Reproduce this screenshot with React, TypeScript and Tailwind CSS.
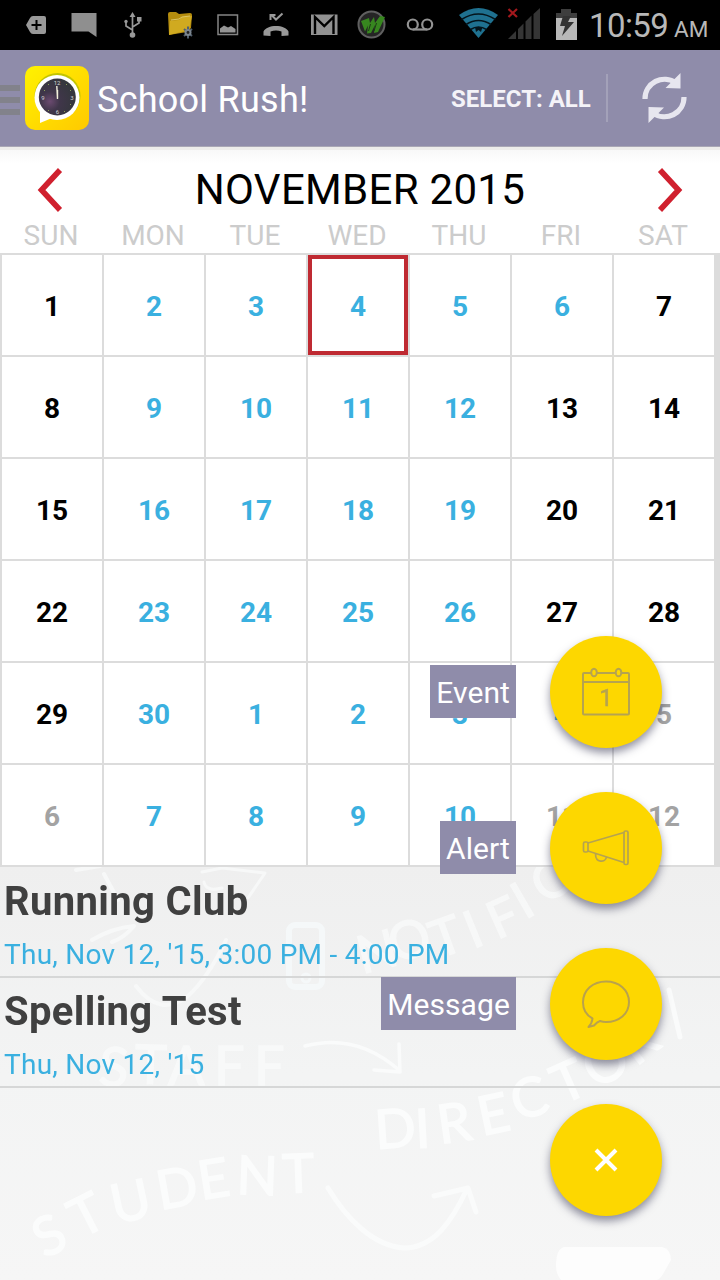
import type { ReactNode } from 'react';
import { clsx } from 'clsx';

type Tone = 'dark' | 'blue' | 'gray';

interface Day {
  label: number;
  tone: Tone;
  selected?: boolean;
}

const WEEKDAYS = ['SUN', 'MON', 'TUE', 'WED', 'THU', 'FRI', 'SAT'];

// d = regular day, b = day with events, g = day outside the month
const ROWS: [number[], string][] = [
  [[1, 2, 3, 4, 5, 6, 7], 'dbbbbbd'],
  [[8, 9, 10, 11, 12, 13, 14], 'dbbbbdd'],
  [[15, 16, 17, 18, 19, 20, 21], 'dbbbbdd'],
  [[22, 23, 24, 25, 26, 27, 28], 'dbbbbdd'],
  [[29, 30, 1, 2, 3, 4, 5], 'dbbbbbg'],
  [[6, 7, 8, 9, 10, 11, 12], 'gbbbbgg'],
];

const TONES: Record<string, Tone> = { d: 'dark', b: 'blue', g: 'gray' };

const DAYS: Day[] = ROWS.flatMap(([labels, tones], row) =>
  labels.map((label, i) => ({ label, tone: TONES[tones[i]], selected: row === 0 && label === 4 })),
);

const EVENTS = [
  { title: 'Running Club', time: "Thu, Nov 12, '15, 3:00 PM - 4:00 PM" },
  { title: 'Spelling Test', time: "Thu, Nov 12, '15" },
];

function StatusBar() {
  return (
    <div className="flex h-[50px] shrink-0 bg-black">
      <svg width="588" height="50" viewBox="0 0 588 50" fill="none">
        <path d="M33 16h11a2 2 0 0 1 2 2v14a2 2 0 0 1-2 2H33q-2 0-3-2l-4-7 4-7q1-2 3-2z" fill="#999" />
        <path d="M36.500 20v10M31.500 25h10" stroke="#000" strokeWidth="2" />
        <path d="M71.500 13h25v24l-8-5.500h-17z" fill="#8f8f8f" />
        <g stroke="#999" strokeWidth="1.700">
          <path d="M132.500 35V15M132.500 30l-6.500-4v-5M132.500 27l6.500-4v-4" />
          <circle cx="132.500" cy="35" r="2.800" fill="#999" stroke="none" />
          <circle cx="126" cy="21.500" r="1.700" fill="#999" stroke="none" />
          <path d="M132.500 12l-3 5h6zM137 17h4.500v4.500H137z" fill="#999" stroke="none" />
        </g>
        <path d="M168 14q0-2 2-2h6l3 2 11-1q2 0 2 2l-1 13-4 4-18 3z" fill="#b58d0e" />
        <path d="M170 21l9-1 3-3 10-1-3 14-20 5z" fill="#d0aa20" />
        <path d="M171 20l8-1 3-2 8-1" stroke="#dcc668" />
        <path d="M188 26.500v12M184 29l8 7M192 29l-8 7" stroke="#52606e" strokeWidth="2" />
        <circle cx="188" cy="32.500" r="3.500" fill="#7b858f" />
        <circle cx="188" cy="32.500" r="1.400" fill="#222" />
        <path d="M218 15h19.500v19.500H218z" stroke="#858585" strokeWidth="1.500" />
        <path d="M220 32.500v-4l4-3 4 2 3-1.500 4.500 3v3.500z" fill="#959595" />
        <path d="M263.500 35.500v-4c3-7.500 22-7.500 25 0v4l-7 .5v-4.500q-5.500-2-11 0V36z" fill="#999" />
        <path d="M271.500 15l4.500 4.500 6.500-6M270.500 20v-5h5" stroke="#999" strokeWidth="2" />
        <path d="M311 14.500h26.500v20.500H311z" fill="#929292" />
        <path d="M315 34V17l9.300 9L333.500 17v17" stroke="#000" strokeWidth="2.400" />
        <circle cx="371.500" cy="24.500" r="13" fill="#252525" stroke="#606060" strokeWidth="2" />
        <path d="M361 21l8-3 1 5 4-6 1 6 5-7 5 1-7 15-4 1 1-8-4 8-4 .5 1-8-3 6z" fill="#37871f" />
        <path d="M370.500 24l-2 7M376.500 23l-2.500 8" stroke="#1c3c14" />
        <g stroke="#939393" strokeWidth="2.200">
          <circle cx="412.800" cy="24.500" r="5" />
          <circle cx="427.200" cy="24.500" r="5" />
          <path d="M412.800 29.500h14.400" />
        </g>
        <path d="M459 15q19.500-14 39 0l-19.500 23z" fill="#1f7190" />
        <path d="M461.500 19.500q17-11 34 0M466 24.500q12.500-8 25 0M470.500 29.500q8-5 16 0" stroke="#04141b" strokeWidth="1.500" />
        <path d="M475 27l7.500 0-1.500 5-2.500-2-2.500 2z" fill="#04141b" />
        <path d="M508.500 9l8.500 8M517 9l-8.500 8" stroke="#a3181d" strokeWidth="2.200" />
        <path d="M508 39l8-8v8zM518 29l5.500-5.500V39H518zM525.500 21.500l6-6V39h-6zM533.500 14l6.500-6v31h-6.500z" fill="#353535" />
        <path d="M556 13h5v-4h10v4h6v5h-21z" fill="#3e3e3e" />
        <path d="M556 18h21v22h-21z" fill="#b8b8b8" />
        <path d="M563 16h8l-3 6h6l-12 14 3-10h-5z" fill="#333" />
      </svg>
      <div className="flex items-baseline text-[#b8b8b8]">
        <span className="w-[86px] pl-[1px] text-[33px] leading-[52px] tracking-[-0.6px]">10:59</span>
        <span className="text-[22.500px] leading-[52px]">AM</span>
      </div>
    </div>
  );
}

function AppLogo() {
  return (
    <svg width="64" height="64" viewBox="0 0 64 64">
      <defs>
        <linearGradient id="logo" x1="0" y1="0" x2="1" y2="1">
          <stop offset="0" stopColor="#fff200" />
          <stop offset="1" stopColor="#ffc900" />
        </linearGradient>
        <radialGradient id="dial" cx=".3" cy=".62" r=".75">
          <stop offset="0" stopColor="#6b4a70" />
          <stop offset=".35" stopColor="#40364a" />
          <stop offset="1" stopColor="#32373a" />
        </radialGradient>
      </defs>
      <rect width="64" height="64" rx="10" fill="url(#logo)" />
      <circle cx="32.500" cy="30" r="23" fill="#c2c400" />
      <path d="M15 45v12l12-5z" fill="#fff" />
      <circle cx="32" cy="31.500" r="22.500" fill="#fff" />
      <circle cx="32.300" cy="31" r="18.500" fill="url(#dial)" />
      <g fill="#d5d5d5" fontSize="6" textAnchor="middle">
        <text x="32" y="19">12</text>
        <text x="47" y="34">3</text>
        <text x="32.500" y="48">6</text>
        <text x="18" y="34">9</text>
      </g>
      <path d="M32.500 33l-.7-13M32.500 32v-8" stroke="#f3f0dc" strokeWidth="1.400" />
      <path d="M23 18l1 1M42 18l-1 1M46 24l-1 1M46 39l-1-1M40 46l-1-1M23 45l1-1M19 24l1 1" stroke="#8aa05a" />
    </svg>
  );
}

function ActionBar() {
  return (
    <div className="flex h-[97px] shrink-0 items-center border-b border-[#a9a7b5] bg-[#8f8caa] text-white">
      <div className="flex w-[25px] flex-col gap-[6px] pt-[3px]">
        <span className="h-[6px] w-5 bg-[#82828b]" />
        <span className="h-[6px] w-5 bg-[#82828b]" />
        <span className="h-[6px] w-5 bg-[#82828b]" />
      </div>
      <AppLogo />
      <h1 className="ml-2 pt-[3px] text-[36px] leading-none tracking-[0.25px] whitespace-nowrap">School Rush!</h1>
      <div className="ml-auto flex items-center">
        <span className="w-[155px] pt-[1px] text-2xl font-bold whitespace-nowrap text-[#f4f3f8]">SELECT: ALL</span>
        <span className="h-12 w-[2px] bg-[#a3a1b9]" />
        <svg className="mr-8 ml-[33px]" width="47" height="52" viewBox="641 72 47 52" fill="none">
          <path d="M645 99a19.500 19.500 0 0 1 31-16" stroke="#e7e6ef" strokeWidth="5.200" />
          <path d="M684 97a19.500 19.500 0 0 1-31 16" stroke="#e7e6ef" strokeWidth="5.200" />
          <path d="M680.500 73v15.500l-15-.5zM648.500 123v-16l15.500.5z" fill="#e7e6ef" />
        </svg>
      </div>
    </div>
  );
}

function Calendar() {
  return (
    <div className="bg-white">
      <div className="h-[3px] bg-[#ededeb]" />
      <div className="h-[14px] bg-linear-to-b from-[#f8f8f8] to-white" />
      <div className="flex h-[54px] items-center justify-between px-[37px] pb-[3px]">
        <svg width="26" height="44" viewBox="0 0 26 44" fill="none">
          <path d="M23 2L4.500 22 23 42" stroke="#d0202e" strokeWidth="5.600" />
        </svg>
        <h2 className="text-[42px] leading-none tracking-[0.3px] whitespace-nowrap text-black">NOVEMBER 2015</h2>
        <svg width="26" height="44" viewBox="0 0 26 44" fill="none">
          <path d="M3 2l18.500 20L3 42" stroke="#d0202e" strokeWidth="5.600" />
        </svg>
      </div>
      <div className="grid h-[35px] grid-cols-7 gap-[2px] pr-[7px] pl-[1px] text-center text-[28px] leading-[35px] text-[#ccc]">
        {WEEKDAYS.map((day) => (
          <span key={day}>{day}</span>
        ))}
      </div>
      <div className="grid grid-cols-7 gap-[2px] bg-[#dcdcdc] py-[2px] pr-[6px] pl-[2px]">
        {DAYS.map((day, i) => (
          <div
            key={i}
            className={clsx(
              'flex h-[100px] items-center justify-center bg-white pt-[3px] text-[28px] font-bold',
              day.tone === 'dark' && 'text-black',
              day.tone === 'blue' && 'text-[#3ab0e0]',
              day.tone === 'gray' && 'text-[#a3a3a3]',
              day.selected && 'border-4 border-[#bf2a32]',
            )}
          >
            {day.label}
          </div>
        ))}
      </div>
    </div>
  );
}

interface ChalkWordProps {
  size: number;
  // x, baseline y and rotation of each letter
  letters: [string, number, number, number][];
}

function ChalkWord({ size, letters }: ChalkWordProps) {
  return (
    <g fontSize={size}>
      {letters.map(([char, x, y, angle], i) => (
        <text key={i} transform={`translate(${x} ${y}) rotate(${angle})`}>
          {char}
        </text>
      ))}
    </g>
  );
}

// Chalk doodles behind the event list
function ChalkBackdrop() {
  return (
    <svg className="absolute inset-0" width="720" height="413" viewBox="0 867 720 413" fill="none">
      <g fill="#fbfcfc" stroke="#fbfcfc" strokeWidth="1.400" className="font-['Lato',sans-serif]">
        <ChalkWord
          size={54}
          letters={[['S', 45, 1259, -28], ['T', 81, 1239, -27], ['U', 115, 1224, -12], ['D', 160, 1210, -10], ['E', 201, 1200, -9], ['N', 236, 1194, 2], ['T', 283, 1193, -2]]}
        />
        <ChalkWord
          size={54}
          letters={[['D', 376, 1149, -4], ['I', 416, 1148, -3], ['R', 440, 1144, -8], ['E', 482, 1136, -12], ['C', 517, 1121, -16], ['T', 562, 1105, -24], ['O', 596, 1090, -30], ['R', 636, 1067, -38]]}
        />
        <g opacity=".65">
          <ChalkWord
            size={52}
            letters={[['N', 362, 974, -14], ['O', 396, 964, -20], ['T', 438, 959, -20], ['I', 473, 949, -22], ['F', 497, 940, -24], ['I', 525, 920, -30], ['C', 545, 905, -32]]}
          />
          <ChalkWord size={54} letters={[['S', 98, 1085, 4], ['T', 134, 1083, 2], ['A', 168, 1085, 0], ['F', 214, 1085, 0], ['F', 254, 1085, 0]]} />
        </g>
      </g>
      <g stroke="#fafbfb" strokeWidth="5" strokeLinecap="round" strokeLinejoin="round">
        <path d="M328 1188c18 30 45 58 76 60 30 0 48-27 63-59M434 1196l34-8 8 24M669 990l11 47" />
        <path d="M305 1046c30-8 62-4 94 24M399 1044l1 28-26-2" strokeWidth="3.500" />
      </g>
      <g stroke="#f7f8f8" strokeWidth="4" strokeLinecap="round" strokeLinejoin="round">
        <path d="M136 986q24 32 52 10 20-18 38-56M92 940q20-12 42-14-10 12-22 16M76 870l24-4M104 874l14 26" />
        <path d="M202 872l20-4 43 5-17 25M204 882q2 10 18 6" strokeWidth="3" />
      </g>
      <rect x="289" y="925" width="33" height="62" rx="6" stroke="#f5f8f9" strokeWidth="6" />
      <circle cx="306" cy="978" r="4" stroke="#f5f8f9" strokeWidth="3" />
      <path d="M564 1247h98q9 2 9 13l-8 14q-3 5-6 6h-96q-5-6-5-14 0-17 8-19z" fill="#fdfdfd" />
    </svg>
  );
}

function EventList() {
  return (
    <div className="relative grow bg-linear-to-b from-[#efefef] via-[#f3f4f4] to-[#f6f6f6]">
      <ChalkBackdrop />
      <ul className="relative pt-[1px]">
        {EVENTS.map((event) => (
          <li key={event.title} className="h-[110px] border-b-2 border-[#d6d7d7] pl-1 whitespace-nowrap">
            <p className="pt-[9px] text-[40px] leading-[50px] font-bold tracking-[0.35px] text-[#404040]">{event.title}</p>
            <p className="pt-[8px] text-[28px] leading-[40px] tracking-[0.25px] text-[#3ab0e0]">{event.time}</p>
          </li>
        ))}
      </ul>
    </div>
  );
}

function FabAction({ label, children }: { label?: string; children: ReactNode }) {
  return (
    <div className="flex items-center justify-end gap-[34px]">
      {label && (
        <span className="mb-[1px] h-[53px] bg-[#8f8caa] px-[6px] text-[30px] leading-[55px] tracking-[0.1px] whitespace-nowrap text-white">
          {label}
        </span>
      )}
      <button className="flex size-[112px] items-center justify-center rounded-full bg-[#fdd700] shadow-[0_5px_9px_rgba(40,40,70,0.5)]">
        {children}
      </button>
    </div>
  );
}

function FabMenu() {
  return (
    <div className="absolute top-[636px] right-[58px] flex flex-col gap-[44px]">
      <FabAction label="Event">
        <svg width="50" height="50" viewBox="0 0 50 50" fill="none" stroke="#b5a350" strokeWidth="2">
          <path d="M10 6H3q-1 0-1 1v39.500q0 1 1 1h44q1 0 1-1V7q0-1-1-1h-7M16 6h18M2 15h46" />
          <ellipse cx="13" cy="5.500" rx="2.800" ry="3.800" />
          <ellipse cx="37.500" cy="5.500" rx="2.800" ry="3.800" />
          <text x="25" y="39" textAnchor="middle" fontSize="24" fill="#b5a350" strokeWidth=".5">
            1
          </text>
        </svg>
      </FabAction>
      <FabAction label="Alert">
        <svg width="50" height="50" viewBox="0 0 50 50" fill="none" stroke="#b5a350" strokeWidth="1.700" strokeLinejoin="round">
          <rect x="43" y="8" width="4" height="33.500" rx="1.500" />
          <rect x="2.500" y="19" width="4.500" height="10" rx="1.500" />
          <path d="M7 20l36-10.500M7 28l36 11.500M14.500 31c0 9 10 9 11 3" />
        </svg>
      </FabAction>
      <FabAction label="Message">
        <svg width="50" height="50" viewBox="0 0 50 50" fill="none" stroke="#b9a24c" strokeWidth="2" strokeLinejoin="round">
          <path d="M11.500 39.500C5 36 2 30 2 23.500 2 11 12 2.500 25 2.500S48 11 48 23 38 43 25 43q-3 0-6-1-3 1-6 4.500l-5.500 1.500q3.500-3.500 4-8.500z" />
        </svg>
      </FabAction>
      <FabAction>
        <svg width="24" height="24" viewBox="0 0 24 24" fill="none">
          <path d="M2 2l20 20M22 2L2 22" stroke="#fff" strokeWidth="4" />
        </svg>
      </FabAction>
    </div>
  );
}

export default function App() {
  return (
    <div className="relative flex h-[1280px] w-[720px] flex-col overflow-hidden bg-white font-['Roboto',sans-serif]">
      <StatusBar />
      <ActionBar />
      <Calendar />
      <EventList />
      <FabMenu />
    </div>
  );
}
